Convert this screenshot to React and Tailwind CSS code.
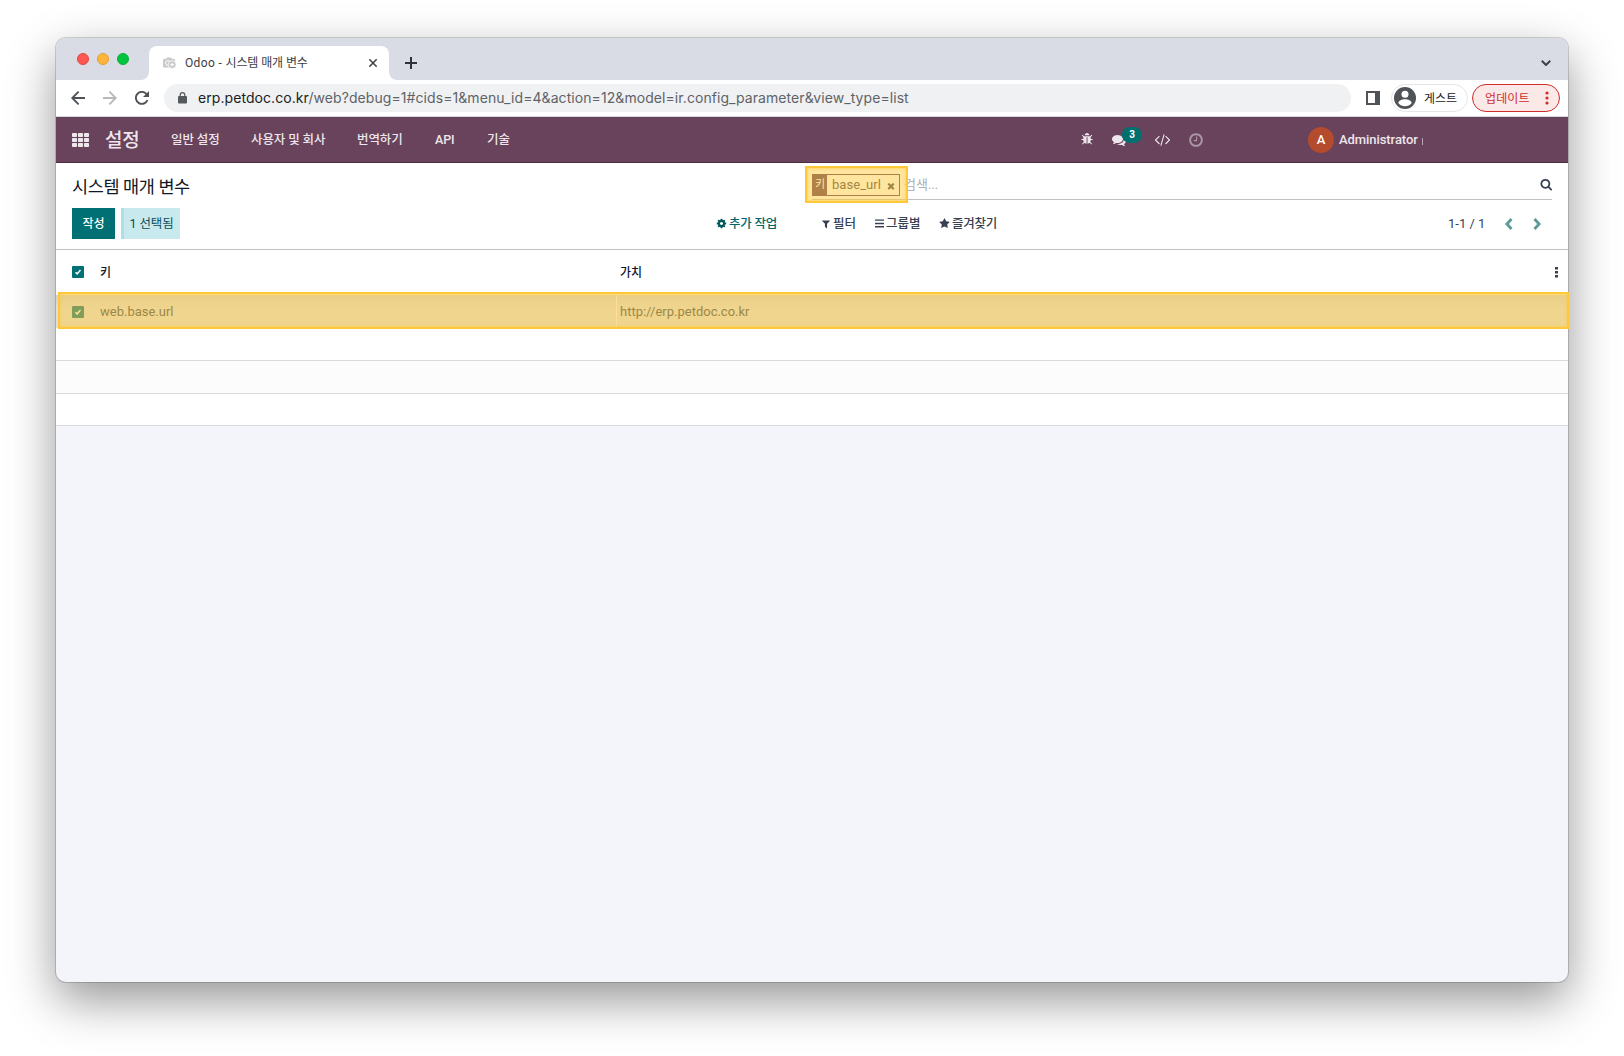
import React from "react";

/* Icon outlines on a 1792-unit grid */
const PATHS = {
  bug: "M1632 896q0 26-19 45t-45 19h-224q0 171-67 290l208 209q19 19 19 45t-19 45q-18 19-45 19t-45-19l-198-197q-5 5-15 13t-42 28.5-65 36.5-82 29-97 13v-896h-128v896q-51 0-101.5-13.5t-87-33-66-39-43.5-32.5l-15-14-183 207q-20 21-48 21-24 0-43-16-19-18-20.5-44.5t15.5-46.5l202-227q-58-114-58-274h-224q-26 0-45-19t-19-45 19-45 45-19h224v-294l-173-173q-19-19-19-45t19-45 45-19 45 19l173 173h844l173-173q19-19 45-19t45 19 19 45-19 45l-173 173v294h224q26 0 45 19t19 45zm-480-576h-640q0-133 93.5-226.5t226.5-93.5 226.5 93.5 93.5 226.5z",
  comments: "M1408 768q0 139-94 257t-256.5 186.5-353.5 68.5q-86 0-176-16-124 88-278 128-36 9-86 16h-3q-11 0-20.5-8t-11.5-21q-1-3-1-6.5t.5-6.5 2-6l2.5-5 3.5-5.5 4-5 4.5-5 4-4.5q5-6 23-25t26-29.5 22.5-29 25-38.5 20.5-44q-124-72-195-177t-71-224q0-139 94-257t256.5-186.5 353.5-68.5 353.5 68.5 256.5 186.5 94 257zm384 256q0 120-71 224.5t-195 176.5q10 24 20.5 44t25 38.5 22.5 29 26 29.5 23 25q1 1 4 4.5t4.5 5 4 5 3.5 5.5l2.5 5 2 6 .5 6.5-1 6.5q-3 14-13 22t-22 7q-50-7-86-16-154-40-278-128-90 16-176 16-271 0-472-132 58 4 88 4 161 0 309-45t264-129q125-92 192-212t67-254q0-77-23-152 129 71 204 178t75 230z",
  code: "M553 1399l-50 50q-10 10-23 10t-23-10l-466-466q-10-10-10-23t10-23l466-466q10-10 23-10t23 10l50 50q10 10 10 23t-10 23l-393 393 393 393q10 10 10 23t-10 23zm591-1067l-373 1291q-4 13-15.5 19.5t-23.5 2.5l-62-17q-13-4-19.5-15.5t-2.5-24.5l373-1291q4-13 15.5-19.5t23.5-2.5l62 17q13 4 19.5 15.5t2.5 24.5zm657 651l-466 466q-10 10-23 10t-23-10l-50-50q-10-10-10-23t10-23l393-393-393-393q-10-10-10-23t10-23l50-50q10-10 23-10t23 10l466 466q10 10 10 23t-10 23z",
  clock: "M1024 544v448q0 14-9 23t-23 9h-320q-14 0-23-9t-9-23v-64q0-14 9-23t23-9h224v-352q0-14 9-23t23-9h64q14 0 23 9t9 23zm416 352q0-148-73-273t-198-198-273-73-273 73-198 198-73 273 73 273 198 198 273 73 273-73 198-198 73-273zm224 0q0 209-103 385.5t-279.5 279.5-385.5 103-385.5-103-279.5-279.5-103-385.5 103-385.5 279.5-279.5 385.5-103 385.5 103 279.5 279.5 103 385.5z",
  cog: "M1152 896q0-106-75-181t-181-75-181 75-75 181 75 181 181 75 181-75 75-181zm512-109v222q0 12-8 23t-20 13l-185 28q-19 54-39 91 35 50 107 138 10 12 10 25t-9 23q-27 37-99 108t-94 71q-12 0-26-9l-138-108q-44 23-91 38-16 136-29 186-7 28-36 28h-222q-14 0-24.5-8.5t-11.5-21.5l-28-184q-49-16-90-37l-141 107q-10 9-25 9-14 0-25-11-126-114-165-168-7-10-7-23 0-12 8-23 15-21 51-66.5t54-70.5q-27-50-41-99l-183-27q-13-2-21-12.5t-8-23.5v-222q0-12 8-23t19-13l186-28q14-46 39-92-40-57-107-138-10-12-10-24 0-10 9-23 26-36 98.5-107.5t94.5-71.5q13 0 26 10l138 107q44-23 91-38 16-136 29-186 7-28 36-28h222q14 0 24.5 8.5t11.5 21.5l28 184q49 16 90 37l142-107q9-9 24-9 13 0 25 10 129 119 165 170 7 8 7 22 0 12-8 23-15 21-51 66.5t-54 70.5q26 50 41 98l183 28q13 2 21 12.5t8 23.5z",
  search: "M1216 832q0-185-131.5-316.5t-316.5-131.5-316.5 131.5-131.5 316.5 131.5 316.5 316.5 131.5 316.5-131.5 131.5-316.5zm512 832q0 52-38 90t-90 38q-54 0-90-38l-343-342q-179 124-399 124-143 0-273.5-55.5t-225-150-150-225-55.5-273.5 55.5-273.5 150-225 225-150 273.5-55.5 273.5 55.5 225 150 150 225 55.5 273.5q0 220-124 399l343 343q37 37 37 90z",
  filter: "M1595 295q17 41-14 70l-493 493v742q0 42-39 59-13 5-25 5-27 0-45-19l-256-256q-19-19-19-45v-486l-493-493q-31-29-14-70 17-39 59-39h1280q42 0 59 39z",
  star: "M1728 647q0 22-26 48l-363 354 86 500q1 7 1 20 0 21-10.5 35.5t-30.5 14.5q-19 0-40-12l-449-236-449 236q-22 12-40 12-21 0-31.5-14.5t-10.5-35.5q0-6 2-20l86-500-364-354q-25-27-25-48 0-37 56-46l502-73 225-455q19-41 49-41t49 41l225 455 502 73q56 9 56 46z",
  times: "M1490 1322q0 40-28 68l-136 136q-28 28-68 28t-68-28l-294-294-294 294q-28 28-68 28t-68-28l-136-136q-28-28-28-68t28-68l294-294-294-294q-28-28-28-68t28-68l136-136q28-28 68-28t68 28l294 294 294-294q28-28 68-28t68 28l136 136q28 28 28 68t-28 68l-294 294 294 294q28 28 28 68z",
};

function Icon({ name, className }) {
  return (
    <svg viewBox="0 0 1792 1792" className={`shrink-0 overflow-visible fill-current ${className}`}>
      <path d={PATHS[name]} />
    </svg>
  );
}

function TabStrip() {
  return (
    <div className="flex h-[42px] bg-[#d9dce4] text-[#3c4043]">
      <div className="mt-[15px] ml-[21px] flex h-3 gap-2">
        <i className="size-3 rounded-full border border-[#e2463f] bg-[#ff5650]" />
        <i className="size-3 rounded-full border border-[#e0a033] bg-[#ffb53b]" />
        <i className="size-3 rounded-full border border-[#0caf38] bg-[#00c440]" />
      </div>
      <div className="relative mt-2 ml-[20px] flex h-[34px] w-[240px] items-center rounded-t-[8px] bg-white">
        <svg viewBox="0 0 8 8" className="absolute bottom-0 -left-2 size-2 fill-white"><path d="M8 0v8H0a8 8 0 0 0 8-8z" /></svg>
        <svg viewBox="0 0 8 8" className="absolute -right-2 bottom-0 size-2 fill-white"><path d="M0 0v8h8a8 8 0 0 1-8-8z" /></svg>
        <svg viewBox="0 0 14 12" className="ml-[14px] h-3 w-[14px]">
          <path d="M1 2h2L4 .5h4L9 2h2q1 0 1 1v6.500q0 1-1 1H1q-1 0-1-1V3q0-1 1-1z" fill="#c9c9c9" />
          <circle cx="5" cy="6" r="2.400" fill="none" stroke="#fff" />
          <circle cx="9.200" cy="7.600" r="4" fill="#c9c9c9" stroke="#fff" strokeWidth=".8" />
          <path d="M9.200 5.600v4M7.200 7.600h4" stroke="#fff" />
        </svg>
        <span className="ml-[8px] w-[180px] text-[12px] tracking-[-0.1px] whitespace-nowrap"><span className="tracking-[0.35px]">Odoo - </span>시스템 매개 변수</span>
        <svg viewBox="0 0 8 8" className="ml-[4px] size-2 stroke-current" strokeWidth="1.500"><path d="M.3.300l7.400 7.400M7.700.300L.3 7.700" /></svg>
      </div>
      <svg viewBox="0 0 12 12" className="mt-[19px] ml-[16px] size-3 stroke-[#2f3236]" strokeWidth="2"><path d="M6 0v12M0 6h12" /></svg>
      <svg viewBox="0 0 10 6" className="mt-[22px] mr-[17px] ml-auto h-[6px] w-[10px] fill-none stroke-[#3c4043]" strokeWidth="2"><path d="M.8.800L5 5 9.200.800" /></svg>
    </div>
  );
}

function AddressBar() {
  return (
    <div className="flex h-[37px] items-center border-b border-[#d3d6dc] bg-white">
      <svg viewBox="0 0 14 14" className="ml-[15px] size-[14px] fill-none stroke-[#4f5357]" strokeWidth="1.900"><path d="M14 7H1.500M7.600.700L1.300 7l6.300 6.300" /></svg>
      <svg viewBox="0 0 14 14" className="ml-[18px] size-[14px] fill-none stroke-[#b7b9bb]" strokeWidth="1.900"><path d="M0 7h12.500M6.400.700L12.700 7l-6.300 6.300" /></svg>
      <svg viewBox="0 0 14 14" className="ml-[18px] size-[14px] fill-none stroke-[#4f5357]" strokeWidth="1.900"><path d="M12.500 9A6 6 0 1 1 11.300 2.800L13 4.500" /><path d="M14 0v6H8z" className="fill-[#4f5357] stroke-none" /></svg>
      <div className="ml-[15px] flex h-7 w-[1187px] items-center rounded-full bg-[#eff1f3]">
        <svg viewBox="0 0 9 12" className="ml-[14px] h-3 w-[9px]"><rect y="4" width="9" height="7.500" rx="1" fill="#55595d" /><path d="M2.200 4.500V2.900a2.300 2.300 0 0 1 4.600 0v1.600" fill="none" stroke="#55595d" strokeWidth="1.200" /></svg>
        <span className="ml-[11px] pb-[2px] font-[Inter,sans-serif] text-[14px] tracking-[0.07px] whitespace-nowrap text-[#5f6368]"><span className="text-[#202124]">erp.petdoc.co.kr</span>/web?debug=1#cids=1&amp;menu_id=4&amp;action=12&amp;model=ir.config_parameter&amp;view_type=list</span>
      </div>
      <svg viewBox="0 0 14 14" className="ml-[15px] size-[14px]"><path d="M0 0h14v14H0zM2 2v10h7V2z" fillRule="evenodd" fill="#4f5357" /></svg>
      <div className="ml-[11px] flex h-7 w-[77px] items-center rounded-full border border-[#e3e5e8] pl-[2px] text-[12px] text-[#202124]">
        <svg viewBox="0 0 22 22" className="size-[22px] shrink-0"><circle cx="11" cy="11" r="11" fill="#4f5357" /><circle cx="11" cy="7.200" r="3.500" fill="#fff" /><path d="M4.300 16c1-5 12.400-5 13.400 0-3.400 4.300-10 4.300-13.400 0z" fill="#fff" /></svg>
        <span className="ml-[8px] pt-[2px] whitespace-nowrap">게스트</span>
      </div>
      <div className="ml-[4px] flex h-7 w-[88px] items-center rounded-full border border-[#cf2d2a] bg-[#fbe9e8] text-[12px] text-[#cf2d2a]">
        <span className="ml-[12px] w-[59px] pt-[2px] tracking-[0.1px] whitespace-nowrap">업데이트</span>
        <svg viewBox="0 0 4 14" className="ml-[1px] h-[14px] w-[4px] fill-current"><circle cx="2" cy="2" r="1.600" /><circle cx="2" cy="7" r="1.600" /><circle cx="2" cy="12" r="1.600" /></svg>
      </div>
    </div>
  );
}

function NavBar() {
  return (
    <div className="flex h-[46px] items-center border-b border-[#4d2a42] bg-[#68435b] text-[12.500px] font-medium text-[#eee6ec]">
      <svg viewBox="0 0 17 14" className="ml-[16px] h-[14px] w-[17px] fill-current">
        {[0, 6, 12].map((x) => [0, 5, 10].map((y) => <rect key={`${x}-${y}`} x={x} y={y} width="5" height="4" rx=".8" />))}
      </svg>
      <span className="ml-[16px] w-[66px] pt-[3px] text-[19px] tracking-[-0.3px]">설정</span>
      <div className="flex gap-8 pt-[2px] tracking-[-0.1px] whitespace-nowrap">
        <span className="w-[48px]">일반 설정</span>
        <span className="w-[74px]">사용자 및 회사</span>
        <span className="w-[46px]">번역하기</span>
        <span className="w-[20px]">API</span>
        <span className="w-[22px]">기술</span>
      </div>
      <Icon name="bug" className="ml-[572px] size-[13px]" />
      <div className="relative ml-[18px] size-[14px]">
        <Icon name="comments" className="size-[14px]" />
        <span className="absolute -top-[6px] left-[10px] flex h-4 w-5 items-center justify-center rounded-full bg-[#00706f] text-[10px] font-bold text-white">3</span>
      </div>
      <Icon name="code" className="ml-[29px] size-[15px]" />
      <Icon name="clock" className="ml-[18px] size-[16px] opacity-50" />
      <span className="ml-[104px] flex size-[26px] items-center justify-center rounded-full bg-[#b44b2d] text-[13px] text-white">A</span>
      <span className="ml-[5px] w-[83px] text-[13px] tracking-[-0.07px] whitespace-nowrap">Administrator</span>
      <i className="mt-[3px] h-[7px] w-px bg-[#b8a5b2]" />
    </div>
  );
}

function Highlight({ className }) {
  return <div className={`pointer-events-none absolute border-2 border-[#ffc73a] bg-[#ffcb3d]/50 shadow-[inset_0_0_3px_#ffcb3d] ${className}`} />;
}

function ControlPanel() {
  return (
    <div className="flex h-[87px] flex-col border-b border-[#bfc1c6] bg-white">
      <div className="flex h-[37px]">
        <h1 className="mt-[11px] ml-[16px] w-[740px] text-[17.500px] leading-[26px] tracking-[-0.4px] text-[#111827]">시스템 매개 변수</h1>
        <div className="relative flex w-[740px] border-b border-[#bfc1c6]">
          <div className="mt-[11px] flex h-[22px] w-[88px] items-center border border-[#5f3650] text-[13px] text-[#3d4148]">
            <span className="flex h-full w-[14px] items-center justify-center bg-[#5f3650] text-[11px] text-white">키</span>
            <span className="ml-[5px] w-[54px] tracking-[0.05px]">base_url</span>
            <Icon name="times" className="mt-[1px] size-[10px]" />
          </div>
          <span className="mt-[12px] ml-[4px] text-[13px] leading-5 text-[#adafb5]">검색...</span>
          <Icon name="search" className="mt-[15px] ml-auto size-[12.500px] text-[#374151]" />
          <Highlight className="top-[3px] -left-[7px] h-[37px] w-[103px]" />
        </div>
      </div>
      <div className="mt-[8px] flex h-[31px] items-center text-[12.500px] font-medium whitespace-nowrap text-[#374151]">
        <button className="ml-[16px] flex h-[31px] w-[43px] items-center justify-center bg-[#007074] pt-[1px] text-[12px] text-white">작성</button>
        <div className="ml-[6px] flex h-[31px] w-[59px] items-center border-l-[3px] border-[#aedfe4] bg-[#c8eaee] pt-[1px] pl-[5.500px] text-[12.500px] font-normal tracking-[-0.1px] text-[#0e4c55]">1 선택됨</div>
        <Icon name="cog" className="ml-[536px] size-[11px] text-[#01585b]" />
        <span className="ml-[2px] w-[92px] pt-[2px] tracking-[-0.2px] text-[#01666b]">추가 작업</span>
        <Icon name="filter" className="size-[10px]" />
        <span className="ml-[2px] w-[42px] pt-[1px]">필터</span>
        <svg viewBox="0 0 10 9" className="h-[9px] w-[9px] fill-current"><path d="M0 0h10v1.500H0zM0 3.700h10v1.500H0zM0 7.400h10v1.500H0z" /></svg>
        <span className="ml-[2px] w-[53px] pt-[1px]">그룹별</span>
        <Icon name="star" className="size-[11px]" />
        <span className="ml-[2px] w-[496px] pt-[1px] tracking-[-0.25px]">즐겨찾기</span>
        <span className="w-[57px] text-[13px] font-normal">1-1 / 1</span>
        <svg viewBox="0 0 8 12" className="h-3 w-2 fill-none stroke-[#5c9a98]" strokeWidth="2.800"><path d="M6.500 1L1.900 6l4.600 5" /></svg>
        <svg viewBox="0 0 8 12" className="ml-[20px] h-3 w-2 fill-none stroke-[#5c9a98]" strokeWidth="2.800"><path d="M1.500 1l4.600 5-4.600 5" /></svg>
      </div>
    </div>
  );
}

function Checkbox() {
  return (
    <span className="ml-[16px] flex size-3 shrink-0 items-center justify-center rounded-[1px] bg-[#007074]">
      <svg viewBox="0 0 6 6" className="size-[6px] fill-none stroke-white" strokeWidth="1.500"><path d="M.5 3.200L2.200 4.900 5.500 1" /></svg>
    </span>
  );
}

function ListView() {
  return (
    <div className="relative bg-white text-[13px] text-[#111827]">
      <div className="flex h-[45px] items-start pt-[16px] text-[12px] leading-[14px] font-medium">
        <Checkbox />
        <span className="ml-[16px] w-[520px]">키</span>
        <span>가치</span>
        <svg viewBox="0 0 3 12" className="mr-[10px] ml-auto h-3 w-[3px] fill-[#374151]"><path d="M0 1h3v2.500H0zM0 5h3v2.500H0zM0 9h3v2.500H0z" /></svg>
      </div>
      <div className="flex h-[33px] items-center bg-[#dedede] bg-linear-to-b from-[#d2d2d2] to-[#dedede] to-40% text-[#374151]">
        <Checkbox />
        <span className="ml-[16px] w-[516px]">web.base.url</span>
        <span className="h-full w-px bg-[#f3f3f3]" />
        <span className="ml-[3px]">http://erp.petdoc.co.kr</span>
      </div>
      <div className="h-[33px] border-b border-[#d9dbde]" />
      <div className="h-[33px] border-b border-[#d9dbde] bg-[#fcfcfc]" />
      <div className="h-[32px] border-b border-[#d9dbde]" />
      <Highlight className="top-[42px] left-[2px] h-[37px] w-[1511px]" />
    </div>
  );
}

export default function App() {
  return (
    <div className="h-[1056px] w-[1624px] overflow-hidden bg-white pt-[38px] pl-[56px] font-[Roboto,'Noto_Sans_CJK_KR',sans-serif]">
      <div className="h-[944px] w-[1512px] rounded-[10px] bg-[#f4f5fa] shadow-[0_0_0_1px_rgba(0,0,0,0.16),0_18px_48px_rgba(0,0,0,0.42)]">
        <div className="overflow-hidden rounded-t-[10px]">
          <TabStrip />
          <AddressBar />
          <NavBar />
        </div>
        <ControlPanel />
        <ListView />
      </div>
    </div>
  );
}
